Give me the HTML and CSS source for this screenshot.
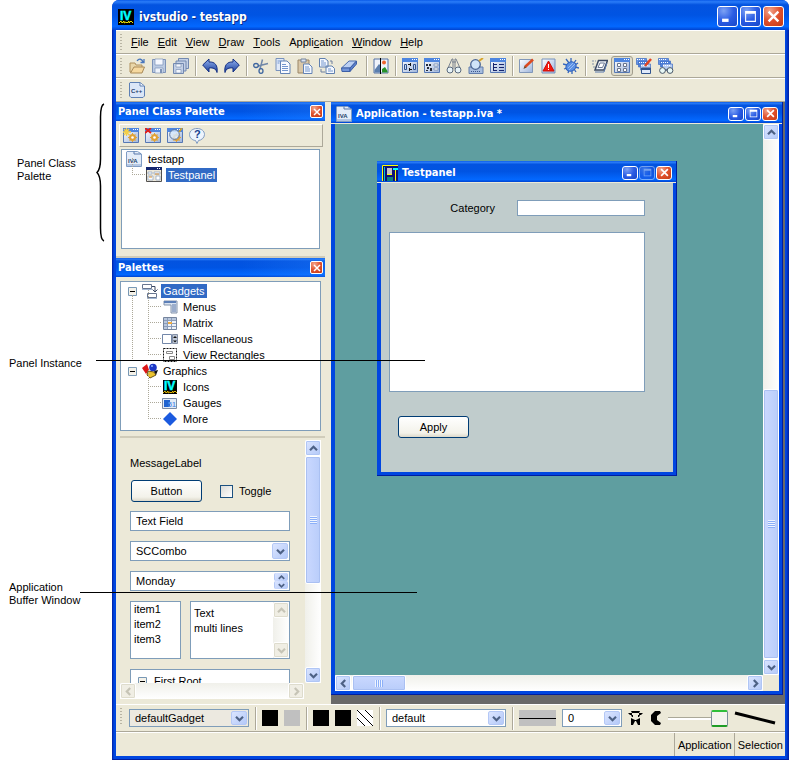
FILE: index.html
```html
<!DOCTYPE html>
<html lang="en">
<head>
<meta charset="utf-8">
<title>ivstudio - testapp</title>
<link rel="stylesheet" href="styles.css">
</head>
<body>
<svg class="sprite" aria-hidden="true">
  <defs>
    <linearGradient id="g-blue" x1="0" y1="0" x2="1" y2="1"><stop offset="0" stop-color="#fff"/><stop offset="1" stop-color="#9db4dc"/></linearGradient>
    <linearGradient id="g-deep" x1="0" y1="0" x2="0" y2="1"><stop offset="0" stop-color="#8fb0ee"/><stop offset="1" stop-color="#1c3f9c"/></linearGradient>
  </defs>
  <symbol id="up" viewBox="0 0 9 9"><path d="M1 6.2 4.5 2.8 8 6.2" fill="none" stroke="currentColor" stroke-width="2.2"/></symbol>
  <symbol id="down" viewBox="0 0 9 9"><path d="M1 2.8 4.5 6.2 8 2.8" fill="none" stroke="currentColor" stroke-width="2.2"/></symbol>
  <symbol id="left" viewBox="0 0 9 9"><path d="M6.2 1 2.8 4.5 6.2 8" fill="none" stroke="currentColor" stroke-width="2.2"/></symbol>
  <symbol id="right" viewBox="0 0 9 9"><path d="M2.8 1 6.2 4.5 2.8 8" fill="none" stroke="currentColor" stroke-width="2.2"/></symbol>
  <symbol id="w-min" viewBox="0 0 12 12"><path d="M1 8h6v3H1z" fill="#fff"/></symbol>
  <symbol id="w-max" viewBox="0 0 12 12"><path d="M1 1h10v10H1zM2 3.5v6.5h8V3.5z" fill="#fff" fill-rule="evenodd"/></symbol>
  <symbol id="w-close" viewBox="0 0 12 12"><path d="M1.5 1.5l9 9M10.500 1.500l-9 9" stroke="#fff" stroke-width="2.200"/></symbol>
  <symbol id="open" viewBox="0 0 16 16"><path d="M1 14V5h5l1 2h6v7z" fill="#e9d6a8" stroke="#b0905c"/><path d="M1.500 15 5 9h10.500L13 15z" fill="#f6d9a0" stroke="#a98a58"/><path d="M8 3c2-3 5-2 6 1m1-3v3.500h-3.500" fill="none" stroke="#4a77bc" stroke-width="1.300"/></symbol>
  <symbol id="save" viewBox="0 0 16 16"><path d="M1.500 1.500h13v13h-13z" fill="#bccbe2" stroke="#7d93b8"/><path d="M4 1h8v6H4z" fill="#f5f8ff" stroke="#7d93b8" stroke-width=".7"/><path d="M4 10h8v5H4z" fill="#eef3fb" stroke="#7d93b8" stroke-width=".7"/><path d="M9 11h2v4H9z" fill="#7d93b8"/></symbol>
  <symbol id="saveall" viewBox="0 0 16 16"><g fill="#c3d0e6" stroke="#7389b0"><path d="M5.500.5h10v10h-10z"/><path d="M3 3h10v10H3z"/><path d="M.5 5.500h10v10H.5z"/></g><path d="M3 6h5v3H3zM3 11.500h5V15H3z" fill="#f4f7fd" stroke="#7389b0" stroke-width=".6"/></symbol>
  <symbol id="undo" viewBox="0 0 16 16"><path d="M.7 7 7 1v3c6-.5 9 3.500 8 10.500-1-4-4-5-8-4.500v4z" fill="url(#g-deep)" stroke="#132f83"/></symbol>
  <symbol id="redo" viewBox="0 0 16 16"><path d="M15.300 7 9 1v3C3 3.500 0 7.500 1 14.500c1-4 4-5 8-4.500v4z" fill="url(#g-deep)" stroke="#132f83"/></symbol>
  <symbol id="cut" viewBox="0 0 16 16"><path d="M9.500 1.500 7 11M15 5.500 5 8" fill="none" stroke="#7087a8" stroke-width="1.500"/><ellipse cx="3" cy="7.500" rx="2.300" ry="2" fill="none" stroke="#3d659f" stroke-width="1.300"/><ellipse cx="8" cy="13" rx="2" ry="2.300" fill="none" stroke="#3d659f" stroke-width="1.300"/></symbol>
  <symbol id="copy" viewBox="0 0 16 16"><path d="M1 .5h8v12H1z" fill="#dfe9f9" stroke="#7892bd"/><path d="M5.500 3H12l3 3v9.500H5.500z" fill="#f9fbff" stroke="#6383b5"/><path d="M7 6.500h4M7 8.500h6M7 10.500h6M7 12.500h6M2.500 3h4M2.500 5h2" stroke="#7396ce"/></symbol>
  <symbol id="paste" viewBox="0 0 16 16"><path d="M1 2h11v13H1z" fill="#d9c7a8" stroke="#9b8768"/><path d="M4 1h5v3H4z" fill="#dae3f2" stroke="#75849c"/><path d="M6.500 6H12l3 3v6.500H6.500z" fill="#f4f8ff" stroke="#6383b5"/><path d="M8 9h4M8 11h5M8 13h5" stroke="#7396ce"/></symbol>
  <symbol id="dup" viewBox="0 0 16 16"><path d="M.5.500H6l3 2.500v6H.5zM7 8h6l2.500 2.500v5H7z" fill="#f5f8fe" stroke="#6080af"/><path d="M2 3h3M2 5h5M2 7h5M9 11h3M9 13h5" stroke="#7396ce"/><path d="M2 11v3h4M11 3h2v3" fill="none" stroke="#6c7f9f"/></symbol>
  <symbol id="eraser" viewBox="0 0 16 16"><path d="M.5 10 8 3h7.500L9 10z" fill="#bcd0f2" stroke="#4a6cae"/><path d="M.5 10H9v3.500H1z" fill="#7395d8" stroke="#3d5fa7"/><path d="M9 10l6.500-7v3L9 13.500z" fill="#5b7fca" stroke="#3d5fa7"/></symbol>
  <symbol id="pic" viewBox="0 0 16 16"><path d="M1 1h14v14H1z" fill="#eef3fb" stroke="#5472a6"/><path d="M1.500 14.500V12L6 6l2 2v6.500z" fill="#5b7fae"/><path d="M9 14.500V11l3-2 2.500 4v1.500z" fill="#279228"/><circle cx="11" cy="4.500" r="2" fill="#ef652c"/><path d="M7.500 0v16" stroke="#000"/></symbol>
  <symbol id="frame" viewBox="0 0 16 16"><path d="M.5.500h15v14H.5z" fill="url(#g-blue)" stroke="#5678b4"/><path d="M0 0h16v4H0z" fill="#4d85e0"/><path d="M10 1.500h1m1 0h1m1 0h1" stroke="#fff"/></symbol>
  <symbol id="dlg1" viewBox="0 0 16 16"><use href="#frame" width="16" height="16"/><path d="M2.500 6.500h2v5h-2zM11.500 6.500h2v5h-2z" fill="#c5d8f5" stroke="#31528c"/><path d="M6 6.500h3M8.500 5v3M10 11.500H7M7.500 10v3" fill="none" stroke="#111"/></symbol>
  <symbol id="dlg2" viewBox="0 0 16 16"><use href="#frame" width="16" height="16"/><path d="M2 6h2v2H2zM5 6h2v2H5zM3 9h2v2H3zM6 10h2v3H6zM2 12h2v1H2z" fill="#252b3a"/><path d="M10 6h4v2h-4zM10 10h4v2h-4z" fill="#fff" stroke="#6c83ab" stroke-width=".7"/></symbol>
  <symbol id="binoc" viewBox="0 0 16 16"><path d="M2 10 6 1h1v10M14 10 10 1H9v10M6 4h4" fill="none" stroke="#78818e"/><circle cx="4" cy="12" r="3" fill="#e6f3f8" stroke="#5b6a7e"/><circle cx="12" cy="12" r="3" fill="#e6f3f8" stroke="#5b6a7e"/></symbol>
  <symbol id="inspect" viewBox="0 0 16 16"><path d="M1 9h14v6.500H1z" fill="#a6bddf" stroke="#637fae"/><path d="M3 13.500h10" stroke="#3c568a" stroke-dasharray="1 1"/><circle cx="7.500" cy="6.500" r="4.800" fill="#cfe4f8" stroke="#4b6795" stroke-width="1.300"/><path d="M11 3l4-3" stroke="#d7a42c" stroke-width="2"/></symbol>
  <symbol id="dlg3" viewBox="0 0 16 16"><use href="#frame" width="16" height="16"/><path d="M3.500 5v8M3 6.500h4M3 9.500h4M3 12.500h4M9 6.500h5M9 9.500h5M9 12.500h5" stroke="#15246d"/></symbol>
  <symbol id="edit" viewBox="0 0 16 16"><path d="M.5 1.500h13v13H.5z" fill="url(#g-blue)" stroke="#8197b9"/><path d="M6 9 14 1.500" stroke="#dc4a20" stroke-width="2.500"/><path d="M4.500 11l1-3 2 1.500z" fill="#6b4927"/></symbol>
  <symbol id="alert" viewBox="0 0 16 16"><path d="M1 1h13v14H1z" fill="url(#g-blue)" stroke="#7692bd"/><path d="M7.500 3 13 13H2z" fill="#f4190f" stroke="#c90d08" stroke-linejoin="round"/><path d="M7.500 6v4M7.500 11v1" stroke="#fff"/></symbol>
  <symbol id="bug" viewBox="0 0 16 16"><path d="M3 1l3 4M8 0v4M13 2l-2 3M0 6l4 1M1 11l3-1M5 15l1-3M9 16v-3M13 14l-2-3M16 10l-4-1M15 5l-3 2" stroke="#3566bc" stroke-width="1.300"/><ellipse cx="8" cy="8.500" rx="5.300" ry="4.500" transform="rotate(-30 8 8.500)" fill="#5b91e5" stroke="#2f60bb"/><path d="M5 10l5-5M6 12l6-6" stroke="#98bcf3"/></symbol>
  <symbol id="run" viewBox="0 0 16 16"><path d="M6.500 2.500h9L12 12H3z" fill="#f1f4fa" stroke="#3a4863" stroke-width="1.500"/><path d="M8 5h4.500l-2 4.500H6z" fill="#fff" stroke="#6f7c95"/><path d="M3 14h9l3-9" fill="none" stroke="#5878ad"/><path d="M0 3h4M0 6h3M1 9h2" stroke="#8291a8" stroke-dasharray="2 1"/></symbol>
  <symbol id="panels" viewBox="0 0 16 16"><use href="#frame" width="16" height="16"/><path d="M3.500 5.500h3v3h-3zM9.500 5.500h3v3h-3zM3.500 10.500h3v3h-3zM9.500 10.500h3v3h-3z" fill="#fff" stroke="#68748d"/></symbol>
  <symbol id="stack" viewBox="0 0 16 16"><g stroke="#3d6bc2" stroke-width=".7"><path d="M.5.500h10v6H.5z" fill="#6795e8"/><path d="M2.500 3h10v6h-10z" fill="#4e80db"/><path d="M4.500 6h10v6h-10z" fill="#b8cdf2"/></g><path d="M1 1.500h8M3 4.500h8M5 7.500h8" stroke="#fff" stroke-dasharray="1 1"/></symbol>
  <symbol id="stackedit" viewBox="0 0 16 16"><use href="#stack" width="16" height="16"/><path d="M5.500 10h9v5.500h-9z" fill="#dfe9fa" stroke="#31548f"/><path d="M5 11h10" stroke="#31548f" stroke-width="2"/><path d="M9 8l6-7" stroke="#e34522" stroke-width="2.500"/></symbol>
  <symbol id="stackfind" viewBox="0 0 16 16"><use href="#stack" width="16" height="16"/><circle cx="4.500" cy="12.500" r="2.900" fill="#e8f8f6" stroke="#4a5768"/><circle cx="12" cy="12.500" r="2.900" fill="#e8f8f6" stroke="#4a5768"/><path d="M7 12h3" stroke="#4a5768"/></symbol>
  <symbol id="gear" viewBox="0 0 16 16"><use href="#frame" width="16" height="16"/><circle cx="9.500" cy="9.500" r="2.500" fill="#fff3c9" stroke="#e0a235" stroke-width="2"/><path d="M9.500 5v9M5 9.500h9M6.500 6.500l6 6M12.500 6.500l-6 6" stroke="#e0a235"/><circle cx="9.500" cy="9.500" r="1.300" fill="#fff"/></symbol>
  <symbol id="newclass" viewBox="0 0 16 16"><use href="#gear" width="16" height="16"/><path d="M3.500 0v8M0 4h8M1 1l5 6M6 1 1 7" stroke="#f4cf47" stroke-width="1.300"/></symbol>
  <symbol id="delclass" viewBox="0 0 16 16"><use href="#gear" width="16" height="16"/><path d="M0 0l6 5M6 0 0 5" stroke="#e21c17" stroke-width="1.800"/></symbol>
  <symbol id="findclass" viewBox="0 0 16 16"><use href="#gear" width="16" height="16"/><circle cx="7.500" cy="6.500" r="4.800" fill="#d6e8fa" fill-opacity=".85" stroke="#5a759f"/><path d="M12 4l3-4" stroke="#c69d32" stroke-width="1.800"/></symbol>
  <symbol id="form" viewBox="0 0 16 16"><path d="M.5.500h15v14H.5z" fill="#eee9da" stroke="#53514f"/><path d="M0 0h16v3H0z" fill="#15276f"/><path d="M11 1.500h4" stroke="#fff" stroke-dasharray="1 1"/><path d="M2 5h4v2H2zM2 9h5v4H2zM8 5h6v2H8zM10 9h4v4h-4z" fill="#fff" stroke="#89a1be" stroke-width=".7"/><path d="M3 10h3M9 7h4" stroke="#d48f39"/></symbol>
  <symbol id="minus" viewBox="0 0 9 9"><path d="M.5.500h8v8h-8z" fill="#f5f2e9" stroke="#7898b5"/><path d="M2 4.500h5" stroke="#000"/></symbol>
  <symbol id="gadgets" viewBox="0 0 16 16"><path d="M.5 1.500h9v4h-9zM5.500 10.500h9v4h-9z" fill="#fff" stroke="#687690"/><path d="M0 6.500h10M5 15.500h10" stroke="#a3b8d4"/><path d="M10 3.500h3V9M10.500 6.500 13 9l2.500-2.500" fill="none" stroke="#394660"/></symbol>
  <symbol id="menus" viewBox="0 0 16 16"><path d="M2 2h13v12H9V6H2z" fill="#d9e3f1" stroke="#8493aa"/><path d="M2 3h12" stroke="#5c7fb8" stroke-width="2"/><path d="M10 6h4M10 8h4M10 10h4M10 12h4" stroke="#5f79a7"/></symbol>
  <symbol id="matrix" viewBox="0 0 16 16"><path d="M1.500 2.500h13v12h-13z" fill="#eef2f8" stroke="#75849d"/><path d="M2 3h12v2H2zM2 5h3v9H2z" fill="#b9c7dc"/><path d="M2 5.500h12M2 8.500h12M2 11.500h12M5.500 3v11M9.500 3v11" stroke="#8b9cb9"/><path d="M6 7h4v2H6z" fill="#efab42"/></symbol>
  <symbol id="misc" viewBox="0 0 16 16"><path d="M.5 3.500h9v9h-9z" fill="#fff" stroke="#7287a9"/><path d="M10.500 3.500h5v9h-5z" fill="#bdc7d6" stroke="#8590a5"/><path d="M11 7l2-2 2 2zM11 9.500l2 2 2-2z" fill="#111"/></symbol>
  <symbol id="rects" viewBox="0 0 16 16"><path d="M1.500 1.500h13v13h-13z" fill="#fff" stroke="#111" stroke-dasharray="2 1"/><path d="M4.500 4.500h6v2h-6zM7.500 9.500h5v3h-5z" fill="#fff" stroke="#888"/></symbol>
  <symbol id="graphics" viewBox="0 0 16 16"><path d="M0 5 5 1l2 6-3 4z" fill="#dc1818"/><circle cx="11" cy="4.500" r="3.800" fill="#1c37c6"/><circle cx="10" cy="3" r="1" fill="#8ab3ff"/><path d="M6 8l6 1 2 3-6 3-3-3z" fill="#ecc42f" stroke="#6c5718"/><path d="M12 8l4-1-2 5z" fill="#111"/></symbol>
  <symbol id="more" viewBox="0 0 16 16"><path d="M8 1l7 7-7 7-7-7z" fill="#1b5adf"/></symbol>
  <symbol id="panelico" viewBox="0 0 16 16"><path d="M0 0h16v16H0z" fill="#101078"/><path d="M.5 16V.5H16M13.500 4v12" fill="none" stroke="#ffff00"/><path d="M2.500 2v14" stroke="#00c8d0"/><path d="M5 3h5v7H5z" fill="#c6c2c8"/><path d="M5 9.500h5" stroke="#ff0"/><path d="M5 12h6v4H5z" fill="#0a8080"/><path d="M11 4h5" stroke="#00ffff" stroke-width="2"/></symbol>
  <symbol id="hourglass" viewBox="0 0 16 16"><path d="M3 1h9l-1 2H4zM0 3h4v2H2zM11 3h4l-2 2h-2zM3 5h2v2H4zM10 5h2l-1 2h-1zM3 8l4 2h1l4-2v7H3z" fill="#000"/><path d="M5 15l2-4h1l2 4z" fill="#ece9d8"/></symbol>
  <symbol id="arc" viewBox="0 0 12 16"><path d="M5 1h5l1 2-4 3v4l4 3-1 2H5L1 11V5z"/></symbol>
</svg>

<main class="page">
  <section class="window" aria-label="ivstudio - testapp">
    <header class="titlebar">
      <svg class="icon" viewBox="0 0 16 16"><path d="M0 0h16v16H0z"/><text class="logo" x="2" y="11">IV</text><path d="M1 14l2-2 1 2 2-2v2l2-1 1 1 2-2v2l2-2 2 2" fill="none" stroke="#f2e600"/></svg>
      <h1>ivstudio - testapp</h1>
      <div class="winbtns">
        <button aria-label="Minimize"><svg><use href="#w-min"/></svg></button>
        <button aria-label="Maximize"><svg><use href="#w-max"/></svg></button>
        <button class="close" aria-label="Close"><svg><use href="#w-close"/></svg></button>
      </div>
    </header>

    <div class="client">
      <nav class="bar menubar">
        <button><u>F</u>ile</button><button><u>E</u>dit</button><button><u>V</u>iew</button><button><u>D</u>raw</button><button><u>T</u>ools</button><button>Appli<u>c</u>ation</button><button><u>W</u>indow</button><button><u>H</u>elp</button>
      </nav>
      <div class="bar toolbar">
        <div class="group">
          <button aria-label="Open"><svg class="icon"><use href="#open"/></svg></button>
          <button aria-label="Save"><svg class="icon"><use href="#save"/></svg></button>
          <button aria-label="Save all"><svg class="icon"><use href="#saveall"/></svg></button>
        </div>
        <div class="group">
          <button aria-label="Undo"><svg class="icon"><use href="#undo"/></svg></button>
          <button aria-label="Redo"><svg class="icon"><use href="#redo"/></svg></button>
        </div>
        <div class="group roomy">
          <button aria-label="Cut"><svg class="icon"><use href="#cut"/></svg></button>
          <button aria-label="Copy"><svg class="icon"><use href="#copy"/></svg></button>
          <button aria-label="Paste"><svg class="icon"><use href="#paste"/></svg></button>
          <button aria-label="Duplicate"><svg class="icon"><use href="#dup"/></svg></button>
          <button aria-label="Delete"><svg class="icon"><use href="#eraser"/></svg></button>
        </div>
        <div class="group">
          <button aria-label="Image"><svg class="icon"><use href="#pic"/></svg></button>
        </div>
        <div class="group">
          <button aria-label="Layout"><svg class="icon"><use href="#dlg1"/></svg></button>
          <button aria-label="Resources"><svg class="icon"><use href="#dlg2"/></svg></button>
          <button aria-label="Find"><svg class="icon"><use href="#binoc"/></svg></button>
          <button aria-label="Inspect"><svg class="icon"><use href="#inspect"/></svg></button>
          <button aria-label="Tree"><svg class="icon"><use href="#dlg3"/></svg></button>
        </div>
        <div class="group">
          <button aria-label="Edit"><svg class="icon"><use href="#edit"/></svg></button>
          <button aria-label="Errors"><svg class="icon"><use href="#alert"/></svg></button>
          <button aria-label="Debug"><svg class="icon"><use href="#bug"/></svg></button>
        </div>
        <div class="group">
          <button aria-label="Test"><svg class="icon"><use href="#run"/></svg></button>
          <button class="pressed" aria-label="Panels" aria-pressed="true"><svg class="icon"><use href="#panels"/></svg></button>
          <button aria-label="Edit panels"><svg class="icon"><use href="#stackedit"/></svg></button>
          <button aria-label="Find panels"><svg class="icon"><use href="#stackfind"/></svg></button>
        </div>
      </div>
      <div class="bar toolbar">
        <div class="group"><button aria-label="Generate C++"><svg class="icon" viewBox="0 0 16 16"><path d="M1 .5h10L15.500 4v10l-1.500 1.500H2L.5 14V1z" fill="#dbe6f7" stroke="#5e80b4"/><path d="M11 1v3h4" fill="#fff" stroke="#5e80b4"/><text class="tag" x="2" y="11">C++</text></svg></button></div>
      </div>

      <div class="workspace">
        <aside class="dock">
          <section class="panel-classes">
            <header class="docktitle"><h2>Panel Class Palette</h2><button class="close" aria-label="Close"><svg><use href="#w-close"/></svg></button></header>
            <div class="minibar">
              <button aria-label="New class"><svg class="icon"><use href="#newclass"/></svg></button>
              <button aria-label="Delete class"><svg class="icon"><use href="#delclass"/></svg></button>
              <button aria-label="Inspect class"><svg class="icon"><use href="#findclass"/></svg></button>
              <button aria-label="Help"><svg class="icon" viewBox="0 0 16 16"><path d="M8 .5c4.300 0 7.500 2.500 7.500 6S12 12.300 9.500 12.500L8 15.500 6.500 12.500C3.500 12.300.5 10 .5 6.500s3.200-6 7.500-6z" fill="#edf4fd" stroke="#7f9ac0"/><text class="query" x="5" y="10">?</text></svg></button>
            </div>
            <ul class="tree classes">
              <li><div class="node"><svg class="icon" viewBox="0 0 16 16"><path d="M1 .5h10.500L15.500 3v12.500H.5V1z" fill="#e4ecf8" stroke="#7f9cc4"/><path d="M8 .5v2.500h7" fill="none" stroke="#5878ac"/><path d="M1 13h14v2H1z" fill="#b5c7e2"/><text class="tag" x="2" y="12">IVA</text></svg><span>testapp</span></div>
                <ul>
                  <li><div class="node"><svg class="icon"><use href="#form"/></svg><span class="sel">Testpanel</span></div></li>
                </ul>
              </li>
            </ul>
          </section>
          <section class="palettes">
            <header class="docktitle"><h2>Palettes</h2><button class="close" aria-label="Close"><svg><use href="#w-close"/></svg></button></header>
            <ul class="tree kinds">
              <li class="root first"><div class="node"><svg class="pm"><use href="#minus"/></svg><svg class="icon"><use href="#gadgets"/></svg><span class="sel">Gadgets</span></div>
                <ul>
                  <li><div class="node"><svg class="icon"><use href="#menus"/></svg><span>Menus</span></div></li>
                  <li><div class="node"><svg class="icon"><use href="#matrix"/></svg><span>Matrix</span></div></li>
                  <li><div class="node"><svg class="icon"><use href="#misc"/></svg><span>Miscellaneous</span></div></li>
                  <li><div class="node"><svg class="icon"><use href="#rects"/></svg><span>View Rectangles</span></div></li>
                </ul>
              </li>
              <li class="root"><div class="node"><svg class="pm"><use href="#minus"/></svg><svg class="icon"><use href="#graphics"/></svg><span>Graphics</span></div>
                <ul>
                  <li><div class="node"><svg class="icon" viewBox="0 0 16 16"><path d="M1 1h14v14H1z"/><text class="logo" x="2" y="11">IV</text><path d="M1 14l2-2 1 2 2-2v2l2-1 1 1 2-2v2l2-2 2 2" fill="none" stroke="#e2b600"/></svg><span>Icons</span></div></li>
                  <li><div class="node"><svg class="icon" viewBox="0 0 16 16"><path d="M.5 3.500h14v10H.5z" fill="#e3ebf6" stroke="#7b8ba5"/><path d="M2 5h6v7H2z" fill="#1f63d0"/><text class="gauge" x="6" y="12">51</text></svg><span>Gauges</span></div></li>
                  <li><div class="node"><svg class="icon"><use href="#more"/></svg><span>More</span></div></li>
                </ul>
              </li>
            </ul>
          </section>
          <section class="samples">
            <div class="sheet">
              <p class="msg">MessageLabel</p>
              <div class="pair">
                <button class="push">Button</button>
                <label class="toggle"><input type="checkbox">Toggle</label>
              </div>
              <input class="field" type="text" value="Text Field" aria-label="Text field">
              <div class="combo"><select aria-label="Combo"><option>SCCombo</option></select><i class="drop"><svg><use href="#down"/></svg></i></div>
              <div class="spin"><input type="text" value="Monday" aria-label="Day"><div class="steps"><button aria-label="Previous"><svg><use href="#up"/></svg></button><button aria-label="Next"><svg><use href="#down"/></svg></button></div></div>
              <div class="lists">
                <select class="list" size="3" aria-label="Items"><option>item1</option><option>item2</option><option>item3</option></select>
                <div class="multi"><textarea aria-label="Text">Text
multi lines</textarea><div class="vscroll off"><button disabled aria-label="Up"><svg><use href="#up"/></svg></button><button disabled aria-label="Down"><svg><use href="#down"/></svg></button></div></div>
              </div>
              <div class="roots"><svg class="pm"><use href="#minus"/></svg><span>First Root</span></div>
            </div>
            <div class="vscroll">
              <button aria-label="Up"><svg><use href="#up"/></svg></button>
              <div class="thumb sheet-thumb"></div>
              <button class="end" aria-label="Down"><svg><use href="#down"/></svg></button>
            </div>
            <div class="hscroll off">
              <button disabled aria-label="Left"><svg><use href="#left"/></svg></button>
              <button class="end" disabled aria-label="Right"><svg><use href="#right"/></svg></button>
            </div>
          </section>
        </aside>

        <div class="mdi">
          <section class="child">
            <header class="childtitle">
              <svg class="icon" viewBox="0 0 16 16"><path d="M1 .5h10.500L15.500 3v12.500H.5V1z" fill="#e4ecf8" stroke="#7f9cc4"/><path d="M8 .5v2.500h7" fill="none" stroke="#5878ac"/><path d="M1 13h14v2H1z" fill="#b5c7e2"/><text class="tag" x="2" y="12">IVA</text></svg>
              <h2>Application - testapp.iva *</h2>
              <div class="winbtns small">
                <button aria-label="Minimize"><svg><use href="#w-min"/></svg></button>
                <button aria-label="Maximize"><svg><use href="#w-max"/></svg></button>
                <button class="close" aria-label="Close"><svg><use href="#w-close"/></svg></button>
              </div>
            </header>
            <div class="buffer">
              <div class="canvas">
                <section class="testpanel">
                  <header class="childtitle">
                    <svg class="icon"><use href="#panelico"/></svg>
                    <h2>Testpanel</h2>
                    <div class="winbtns small">
                      <button aria-label="Minimize"><svg><use href="#w-min"/></svg></button>
                      <button class="dim" disabled aria-label="Maximize"><svg><use href="#w-max"/></svg></button>
                      <button class="close" aria-label="Close"><svg><use href="#w-close"/></svg></button>
                    </div>
                  </header>
                  <form class="panelform">
                    <div class="catrow"><label for="category">Category</label><input id="category" type="text"></div>
                    <textarea class="notes" aria-label="Notes"></textarea>
                    <button class="push" type="button">Apply</button>
                  </form>
                </section>
              </div>
              <div class="vscroll">
                <button aria-label="Up"><svg><use href="#up"/></svg></button>
                <div class="gap"></div>
                <div class="thumb buffer-thumb"></div>
                <button aria-label="Down"><svg><use href="#down"/></svg></button>
              </div>
              <div class="hscroll">
                <button aria-label="Left"><svg><use href="#left"/></svg></button>
                <div class="thumb across"></div>
                <button class="end" aria-label="Right"><svg><use href="#right"/></svg></button>
              </div>
            </div>
          </section>
        </div>
      </div>

      <div class="bar attrs">
        <div class="group"><div class="combo gray wide"><select aria-label="Gadget palette"><option>defaultGadget</option></select><i class="drop"><svg><use href="#down"/></svg></i></div></div>
        <div class="group"><button class="swatch black" aria-label="Foreground"></button><button class="swatch silver" aria-label="Background"></button></div>
        <div class="group"><button class="swatch black" aria-label="Fill foreground"></button><button class="swatch black" aria-label="Fill background"></button><button class="swatch" aria-label="Pattern"><svg viewBox="0 0 16 16"><path d="M-1-1l18 18M7-1l10 10M-1 7l10 10M-1 15l2 2M15-1l2 2" stroke="#000"/></svg></button></div>
        <div class="group"><div class="combo wide"><select aria-label="Font"><option>default</option></select><i class="drop"><svg><use href="#down"/></svg></i></div></div>
        <div class="group">
          <button class="linestyle" aria-label="Line style"></button>
          <div class="combo narrow"><select aria-label="Line width"><option>0</option></select><i class="drop"><svg><use href="#down"/></svg></i></div>
          <button class="shape" aria-label="Fill rule"><svg><use href="#hourglass"/></svg></button>
          <button class="shape slim" aria-label="Arc mode"><svg><use href="#arc"/></svg></button>
          <input type="range" min="0" max="100" value="100" aria-label="Alpha">
          <svg class="stroke" viewBox="0 0 42 16"><path d="M1 3l40 10" stroke="#000" stroke-width="3"/></svg>
        </div>
      </div>
      <footer class="status"><span></span><span>Application</span><span>Selection</span></footer>
    </div>
  </section>

  <p class="note note-class">Panel Class<br>Palette</p>
  <svg class="brace" viewBox="0 0 9 139"><path d="M8 1C5 2 4.500 7 4.500 14v42c0 8-1 11-3.500 13.500C3.500 72 4.500 75 4.500 83v42c0 7 .5 12 3.500 13" fill="none" stroke="#000" stroke-width="1.500"/></svg>
  <p class="note note-panel">Panel Instance</p>
  <i class="leader leader-panel"></i>
  <p class="note note-buffer">Application<br>Buffer Window</p>
  <i class="leader leader-buffer"></i>
</main>
</body>
</html>
```
FILE: styles.css
```css
:root {
  --face: #ece9d8;
  --edge: #7f9db9;
  --blue: #0046e0;
  --title: linear-gradient(#0a5ae8 0, #2a7cf8 6%, #0353e0 16%, #0054e3 50%, #0368ff 88%, #0143cf 100%);
}

* { box-sizing: border-box; }

body {
  margin: 0;
  background: #fff;
  color: #000;
  font: 11px/14px "Liberation Sans", Arial, sans-serif;
}

h1, h2, p, ul { margin: 0; padding: 0; }
ul { list-style: none; }
button, input, select, textarea {
  font: inherit;
  color: inherit;
  margin: 0;
  padding: 0;
  border: 0;
  border-radius: 0;
  background: none;
  appearance: none;
  outline: none;
}
button { display: flex; align-items: center; justify-content: center; }
textarea { resize: none; display: block; }
svg { display: block; flex: none; }
.sprite { position: absolute; width: 0; height: 0; }
.icon { width: 16px; height: 16px; }
.logo { font: bold 12px "Liberation Sans", sans-serif; fill: #0ff; stroke: #0ff; stroke-width: 0.5; }
.tag { font: bold 6px "Liberation Sans", sans-serif; fill: #23406c; }
.query { font: bold 11px "Liberation Sans", sans-serif; fill: #17408d; }
.gauge { font: bold 7px "Liberation Sans", sans-serif; fill: #5d94ea; }

.page { position: relative; min-height: 100vh; display: flex; padding: 0 1px 0 112px; }

/* Main window */
.window {
  flex: 1;
  min-width: 0;
  display: flex;
  flex-direction: column;
  padding: 0 4px 3px;
  background: linear-gradient(90deg, #001ea0, #0046e0 2px, #0046e0 calc(100% - 3px), #001ea0);
  border-bottom: 1px solid #001ea0;
  border-radius: 7px 7px 0 0;
}
.titlebar {
  display: flex;
  align-items: center;
  gap: 5px;
  height: 30px;
  margin: 0 -4px;
  padding: 3px 5px 0 6px;
  background: var(--title);
  border-radius: 7px 7px 0 0;
  color: #fff;
}
h1, h2 {
  flex: 1;
  color: #fff;
  font-family: "DejaVu Sans Condensed", "DejaVu Sans", sans-serif;
  font-weight: bold;
  white-space: nowrap;
}
h1 { font-size: 12px; line-height: 18px; text-shadow: 1px 1px #0a2f8c; }
h2 { font-size: 11px; line-height: 14px; }
.winbtns { display: flex; gap: 2px; }
.winbtns button, .docktitle .close {
  width: 21px;
  height: 21px;
  border: 1px solid #fff;
  border-radius: 3px;
  background: radial-gradient(circle at 30% 20%, #7da2f4, #2a5ce4 50%, #1747c8);
}
.winbtns .close, .docktitle .close { background: radial-gradient(circle at 30% 20%, #f2a58c, #e0502c 50%, #c33b14); }
.winbtns svg { width: 13px; height: 13px; }
.winbtns.small { gap: 1px; }
.winbtns.small button { width: 16px; height: 14px; }
.winbtns.small svg { width: 9px; height: 9px; }
.winbtns .dim { opacity: .45; }

.client { flex: 1; display: flex; flex-direction: column; background: var(--face); }

.bar {
  display: flex;
  align-items: center;
  height: 24px;
  padding-left: 10px;
  border-top: 1px solid #fff;
  border-bottom: 1px solid #aca899;
  background: repeating-linear-gradient(#b9b5a4 0 1px, transparent 1px 3px) 4px 3px / 2px 17px no-repeat, var(--face);
}
.menubar { gap: 9px; padding-left: 15px; }
.group { display: flex; align-items: center; }
.group + .group { margin-left: 3px; padding-left: 2px; border-left: 1px solid #aca899; box-shadow: inset 1px 0 #fff; }
.toolbar .group + .group { padding-left: 3px; }
.toolbar .roomy { padding-right: 3px; }
.toolbar button { width: 22px; height: 20px; }
.toolbar .pressed { border: 1px solid #a19d8d; border-radius: 3px; background: #dfdccb; }

/* Workspace */
.workspace { flex: 1; display: flex; min-height: 0; }
.dock { display: flex; flex-direction: column; width: 215px; padding-right: 6px; flex: none; }
.docktitle {
  display: flex;
  align-items: center;
  height: 19px;
  padding: 0 2px;
  background: linear-gradient(90deg, transparent 60%, #2a86ff55), var(--title);
}
.docktitle .close { width: 13px; height: 13px; border-radius: 2px; }
.docktitle .close svg { width: 8px; height: 8px; }
.panel-classes { padding-bottom: 7px; border-bottom: 2px solid #d0ccba; }
.minibar {
  display: flex;
  height: 23px;
  margin: 3px 2px 0 3px;
  border: 1px solid #fff;
  border-right-color: #aca899;
  border-bottom-color: #aca899;
}
.minibar button { width: 22px; }

.tree { border: 1px solid var(--edge); background: #fff; }
.node { display: flex; align-items: center; height: 16px; gap: 4px; }
.node span { padding: 0 2px; line-height: 14px; white-space: nowrap; }
.node .sel { background: #316ac5; color: #fff; }
.tree ul .node { position: relative; }
.tree ul .node::before {
  content: "";
  position: absolute;
  right: calc(100% + 1px);
  bottom: 8px;
  width: 12px;
  height: 16px;
  border-left: 1px dotted #aca899;
  border-bottom: 1px dotted #aca899;
}
.classes { height: 100px; margin: 2px 5px 0; padding: 1px 4px; }
.classes ul { padding-left: 20px; }
.kinds { height: 150px; margin: 4px 4px 0; padding: 1px 7px; }
.kinds .node { gap: 3px; }
.pm { width: 9px; height: 9px; }
.root { position: relative; }
.root.first::before {
  content: "";
  position: absolute;
  left: 4px;
  top: 12px;
  height: 64px;
  border-left: 1px dotted #aca899;
}
.root > ul { padding-left: 34px; }
.root > .node .pm { margin-right: 2px; }
.palettes { padding-bottom: 5px; }

.samples {
  flex: 1;
  display: grid;
  grid-template: minmax(0, 1fr) 16px / minmax(0, 1fr) 16px;
  column-gap: 1px;
  margin-left: 4px;
  padding: 2px 4px 5px 0;
  border-top: 2px solid #d0ccba;
}
.sheet { height: 243px; overflow: hidden; display: flex; flex-direction: column; gap: 10px; padding: 15px 14px 0 10px; }
.sheet > * { flex: none; }
.msg { line-height: 16px; }
.pair { display: flex; align-items: center; gap: 18px; height: 20px; padding-left: 1px; }
.push {
  width: 71px;
  height: 22px;
  border: 1px solid #003c74;
  border-radius: 3px;
  background: linear-gradient(#fff, #f3f2ea 80%, #dcd8ca);
}
.toggle { display: flex; align-items: center; gap: 6px; }
.toggle input { width: 13px; height: 13px; border: 1px solid #1c5180; background: linear-gradient(135deg, #dcdcd7, #fff); }
.field, .spin, .combo { height: 20px; border: 1px solid var(--edge); background: #fff; }
.field { padding: 0 5px; }
.combo { position: relative; }
.combo select { display: block; width: 100%; height: 100%; padding: 0 20px 0 5px; }
.drop, .steps button, .vscroll button, .hscroll button {
  border: 1px solid #b4c8f6;
  border-radius: 2px;
  background: linear-gradient(135deg, #dbe5ff, #b4c9f8);
  color: #4d6185;
}
.drop { position: absolute; right: 1px; top: 1px; bottom: 1px; width: 16px; display: flex; align-items: center; justify-content: center; pointer-events: none; }
.drop svg, .vscroll svg, .hscroll svg { width: 9px; height: 9px; }
.spin { display: flex; padding: 1px; }
.spin input { flex: 1; min-width: 0; padding: 0 4px; }
.steps { width: 14px; display: flex; flex-direction: column; }
.steps button { flex: 1; min-height: 0; border-width: 0 1px; }
.steps svg { width: 7px; height: 7px; }
.lists { display: flex; gap: 9px; height: 58px; }
.list { flex: none; width: 51px; height: 58px; padding: 1px; border: 1px solid var(--edge); background: #fff; overflow: hidden; }
.list option { padding: 0 2px; min-height: 15px; line-height: 15px; }
.multi { flex: 1; min-width: 0; display: flex; border: 1px solid var(--edge); background: #fff; }
.multi textarea { flex: 1; min-width: 0; padding: 4px 3px; line-height: 15px; overflow: hidden; }
.roots { display: flex; align-items: center; gap: 7px; height: 24px; padding: 0 7px; border: 1px solid var(--edge); background: #fff; }

/* Scroll bars */
.vscroll { display: flex; flex-direction: column; width: 16px; background: linear-gradient(90deg, #f0f0ea, #fff); }
.hscroll { display: flex; height: 16px; background: linear-gradient(#f0f0ea, #fff); }
.vscroll button, .hscroll button { width: 16px; height: 16px; flex: none; border-color: #fff; box-shadow: inset 0 0 0 1px #b0c6f5; }
.vscroll .end { margin-top: auto; }
.hscroll .end { margin-left: auto; }
.off button { background: #f0eee4; color: #c6c4b6; box-shadow: inset 0 0 0 1px #dedccd; }
.multi .off { justify-content: space-between; }
.thumb {
  border: 1px solid #fff;
  border-radius: 2px;
  box-shadow: inset 0 0 0 1px #aac0f2;
  background: repeating-linear-gradient(#eef4ff 0 1px, #8cb0f8 1px 2px) center / 7px 8px no-repeat, linear-gradient(90deg, #cad8ff, #b9cdfa);
}
.sheet-thumb { height: 128px; }
.gap { flex: 249 1 0; }
.buffer-thumb { flex: 268 1 0; }
.across {
  width: 54px;
  margin-left: 1px;
  background: repeating-linear-gradient(90deg, #eef4ff 0 1px, #8cb0f8 1px 2px) center / 8px 7px no-repeat, linear-gradient(#cad8ff, #b9cdfa);
}
.samples .hscroll { grid-column: 1; }

/* Document area */
.mdi { flex: 1; min-width: 0; display: flex; padding: 0 2px 9px 0; background: #696969; }
.child, .testpanel { display: flex; flex-direction: column; background: var(--blue); border-right: 1px solid #001ea0; border-bottom: 1px solid #001ea0; }
.child { flex: 1; min-width: 0; padding: 0 3px 3px 4px; }
.childtitle {
  display: flex;
  align-items: center;
  gap: 4px;
  height: 22px;
  margin: 0 -3px 0 -4px;
  padding: 2px 4px 0 5px;
  border-bottom: 1px solid var(--face);
  background: var(--title);
}
.buffer { flex: 1; display: grid; grid-template: minmax(0, 1fr) 16px / minmax(0, 1fr) 16px; background: var(--face); }
.canvas { position: relative; background: #5f9ea0; overflow: hidden; }
.testpanel { position: absolute; left: 42px; top: 37px; width: 300px; padding: 0 3px 3px 4px; }
.panelform { display: flex; flex-direction: column; padding: 17px 28px 34px 8px; background: #c0cccc; }
.catrow { display: flex; align-items: center; justify-content: flex-end; gap: 22px; }
.catrow input { width: 128px; height: 16px; border: 1px solid var(--edge); background: #fff; }
.notes { height: 160px; margin-top: 16px; border: 1px solid var(--edge); background: #fff; }
.panelform .push { margin: 24px 0 0 9px; }

/* Attribute bar */
.attrs { height: 28px; padding-left: 13px; }
.attrs .group { gap: 6px; height: 23px; }
.attrs .group + .group { margin-left: 6px; padding-left: 6px; }
.combo.gray { background: #ece9e0; }
.attrs .combo { height: 18px; }
.combo.wide { width: 120px; }
.combo.narrow { width: 60px; }
.swatch { width: 16px; height: 16px; background: #fff; }
.swatch svg { width: 16px; height: 16px; }
.black { background: #000; }
.silver { background: #c0c0c0; }
.linestyle { width: 37px; height: 16px; background: linear-gradient(#000, #000) 0 8px / 100% 1px no-repeat #c0c0c0; }
.shape svg { width: 16px; height: 16px; }
.shape.slim svg { width: 12px; }
input[type="range"] { width: 60px; height: 17px; margin: 0; background: linear-gradient(#aaa898 1px, #fff 1px) center / 100% 3px no-repeat; }
input[type="range"]::-webkit-slider-thumb {
  appearance: none;
  width: 17px;
  height: 17px;
  border: 1px solid #7b8f9c;
  border-top: 2px solid #2fbf3a;
  border-bottom: 2px solid #1f9d27;
  border-radius: 2px;
  background: #f4f3ee;
}
.stroke { width: 42px; height: 16px; }

.status { display: flex; height: 24px; border-top: 1px solid #fff; }
.status span { padding: 4px 2px 0 3px; line-height: 16px; border-left: 1px solid #aca899; }
.status span:first-child { flex: 1; border: 0; }

/* Annotations over the window */
.note { position: absolute; line-height: 13px; }
.note-class { left: 17px; top: 157px; }
.note-panel { left: 9px; top: 357px; }
.note-buffer { left: 9px; top: 581px; }
.brace { position: absolute; left: 96px; top: 103px; width: 9px; height: 139px; }
.leader { position: absolute; height: 1px; background: #000; }
.leader-panel { left: 96px; top: 360px; width: 329px; }
.leader-buffer { left: 80px; top: 592px; width: 337px; }
```
